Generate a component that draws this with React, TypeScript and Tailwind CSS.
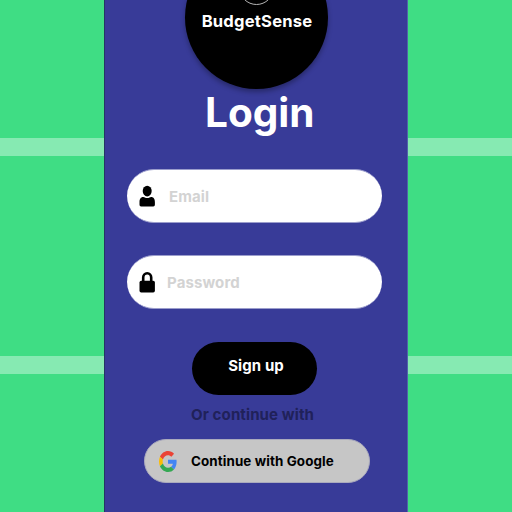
import type { ReactNode } from "react";

function UserIcon() {
  return (
    <svg className="h-[22px] w-4 shrink-0" viewBox="0 0 16 22">
      <ellipse cx="8.2" cy="6.1" rx="4.5" ry="5.3" />
      <path d="M4.3 12C5.4 12 6.2 13.1 8.2 13.1S11 12 12.1 12C14.8 12 15.9 14.2 15.9 17.2V19.6C15.9 20.8 15.3 21.5 14.3 21.5H2.1C1.1 21.5.5 20.8.5 19.6V17.2C.5 14.2 1.6 12 4.3 12Z" />
    </svg>
  );
}

function LockIcon() {
  return (
    <svg className="h-[22px] w-4 shrink-0" viewBox="0 0 16 22">
      <path d="M4.2 11V6.6C4.2 4.2 5.8 2.2 8.2 2.2S12.2 4.2 12.2 6.6V11" fill="none" stroke="black" strokeWidth="2.6" />
      <rect x="0.5" y="9.7" width="15.4" height="11.7" rx="1.7" />
    </svg>
  );
}

function GoogleIcon() {
  return (
    <svg className="h-[21px] w-[18px] shrink-0" viewBox="0 0 48 48" preserveAspectRatio="none">
      <path fill="#EA4335" d="M24 9.5c3.54 0 6.71 1.22 9.21 3.6l6.85-6.85C35.9 2.38 30.47 0 24 0 14.62 0 6.51 5.38 2.56 13.22l7.98 6.19C12.43 13.72 17.74 9.5 24 9.5z" />
      <path fill="#4285F4" d="M46.98 24.55c0-1.57-.15-3.09-.38-4.55H24v9.02h12.94c-.58 2.96-2.26 5.48-4.78 7.18l7.73 6c4.51-4.18 7.09-10.36 7.09-17.65z" />
      <path fill="#FBBC05" d="M10.53 28.59c-.48-1.45-.76-2.99-.76-4.59s.27-3.14.76-4.59l-7.98-6.19C.92 16.46 0 20.12 0 24c0 3.88.92 7.54 2.56 10.78l7.97-6.19z" />
      <path fill="#34A853" d="M24 48c6.48 0 11.93-2.13 15.89-5.81l-7.73-6c-2.15 1.45-4.92 2.3-8.16 2.3-6.26 0-11.57-4.22-13.47-9.91l-7.98 6.19C6.51 42.62 14.62 48 24 48z" />
    </svg>
  );
}

function Field({ icon, children }: { icon: ReactNode; children: ReactNode }) {
  return (
    <div className="flex h-[54px] w-[255px] shrink-0 items-center rounded-full border-y border-[#9b9dcc] bg-white pl-[12px] text-[15px] font-bold leading-5 tracking-[0.1px] text-[#d3d3d3]">
      {icon}
      {children}
    </div>
  );
}

function Stripes() {
  return (
    <div className="flex h-full flex-1 flex-col bg-[#3fdd84]">
      <div className="mt-[138px] h-[18px] bg-[#86eab2]" />
      <div className="mt-[200px] h-[18px] bg-[#86eab2]" />
    </div>
  );
}

export default function App() {
  return (
    <div className="flex h-[512px] w-[512px] overflow-hidden font-['Inter',sans-serif]">
      <div className="flex w-[104px]"><Stripes /></div>
      <main className="flex h-full w-[304px] flex-col overflow-hidden border-x border-l-[#263465] border-r-[#5262aa] bg-[#383b98]">
        <div className="-mt-[54px] ml-[80px] flex h-[143px] w-[143px] shrink-0 flex-col items-center rounded-full bg-black shadow-[0_3px_5px_rgba(0,0,0,0.3)]">
          <div className="mt-[24px] h-[35px] w-[35px] shrink-0 rounded-full border border-[#b5b5b5]" />
          <div className="mt-[6px] pl-px text-[16.6px] font-bold leading-5 tracking-[0.2px] text-white">BudgetSense</div>
        </div>
        <h1 className="ml-[100px] text-[40.5px] font-bold leading-[48px] text-white">Login</h1>
        <div className="ml-[22px] mt-[32px] flex flex-col gap-[32px]">
          <Field icon={<UserIcon />}><span className="ml-[14px] mt-[2px]">Email</span></Field>
          <Field icon={<LockIcon />}><span className="ml-[12px] mt-[2px]">Password</span></Field>
        </div>
        <button className="ml-[87px] mt-[33px] h-[53px] w-[125px] shrink-0 rounded-full bg-black pb-[6px] pl-[3px] text-[15px] font-bold leading-5 tracking-[0.1px] text-white">Sign up</button>
        <p className="ml-[86px] mt-[10px] text-[15.1px] font-bold leading-5 tracking-[0.08px] text-[#20215a]">Or continue with</p>
        <button className="ml-[39px] mt-[14px] flex h-[44px] w-[226px] shrink-0 items-center rounded-full border border-[#aaaabd] bg-[#c6c6c6] pl-[14px] text-[13.4px] font-bold tracking-[0.1px] text-black">
          <GoogleIcon />
          <span className="ml-[14px] mt-px">Continue with Google</span>
        </button>
      </main>
      <Stripes />
    </div>
  );
}
